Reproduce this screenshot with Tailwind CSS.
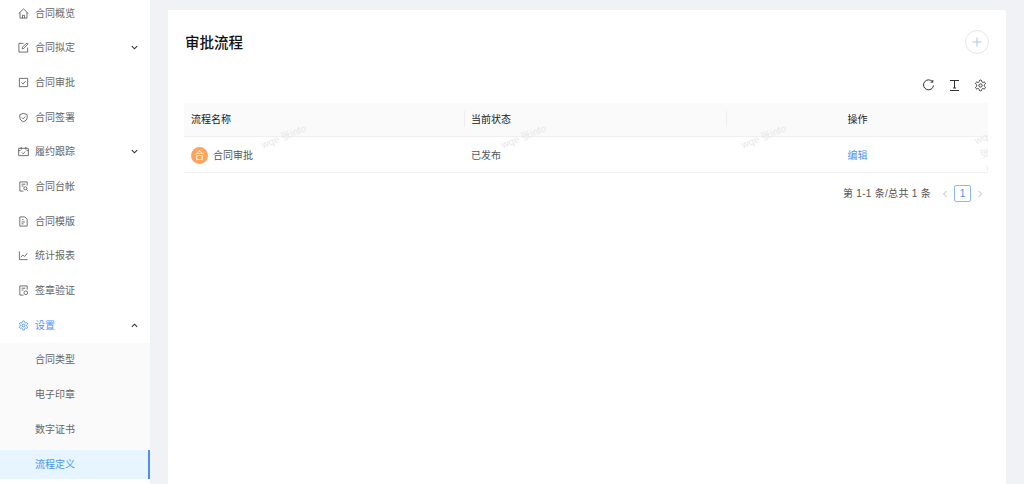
<!DOCTYPE html>
<html lang="zh">
<head>
    <meta charset="UTF-8">
    <title>流程定义</title>
    <script src="https://cdn.jsdelivr.net/npm/@tailwindcss/browser@4"></script>
</head>
<body class="bg-[#f0f2f5] h-[484px] w-[1024px] overflow-hidden font-['Liberation_Sans','Noto_Sans_CJK_SC',sans-serif]">
<div class="flex h-[484px] overflow-hidden">
    <!-- 侧边栏 -->
    <aside class="w-[150px] shrink-0 h-[484px] bg-white text-[10px] text-[#666] overflow-hidden">
        <ul class="-mt-[4.3px]">
            <li class="h-[34.7px] flex items-center pl-[17.500px]">
                <svg class="w-[11px] h-[11px] mr-[6.500px]" viewBox="0 0 12 12" fill="none" stroke="#555" stroke-width=".9"><path d="M.8 6 6 1l5.200 5M2.200 4.800V11h7.600V4.800M4.800 11V8h2.400v3"/></svg>合同概览
            </li>
            <li class="h-[34.7px] flex items-center pl-[17.500px] relative">
                <svg class="w-[11px] h-[11px] mr-[6.500px]" viewBox="0 0 12 12" fill="none" stroke="#555" stroke-width=".9"><path d="M6 1.500H1v9.500h9.500V6M4.500 7.500l.4-2L10 1l1 1-4.600 5z"/></svg>合同拟定
                <svg class="absolute left-[131px] w-[7px] h-[7px]" viewBox="0 0 8 8" fill="none" stroke="#333" stroke-width="1.300"><path d="M1 2.500 4 5.500 7 2.500"/></svg>
            </li>
            <li class="h-[34.7px] flex items-center pl-[17.500px]">
                <svg class="w-[11px] h-[11px] mr-[6.500px]" viewBox="0 0 12 12" fill="none" stroke="#555" stroke-width=".9"><path d="M1.500 1.500h9v9h-9zM3.800 6l1.700 1.700 2.800-3.200"/></svg>合同审批
            </li>
            <li class="h-[34.7px] flex items-center pl-[17.500px]">
                <svg class="w-[11px] h-[11px] mr-[6.500px]" viewBox="0 0 12 12" fill="none" stroke="#555" stroke-width=".9"><path d="M6 1.500 10 2.800V6c0 2.500-1.800 3.800-4 4.500C3.800 9.800 2 8.500 2 6V2.800zM4.200 6l1.400 1.400L7.900 5"/></svg>合同签署
            </li>
            <li class="h-[34.7px] flex items-center pl-[17.500px] relative">
                <svg class="w-[11px] h-[11px] mr-[6.500px]" viewBox="0 0 12 12" fill="none" stroke="#555" stroke-width=".9"><path d="M.7 2.500h10.600v8H.7zM3.500 1v3M8.500 1v3M.7 5h2M9.300 5h2M4 7l1.500 1.500L8 6"/></svg>履约跟踪
                <svg class="absolute left-[131px] w-[7px] h-[7px]" viewBox="0 0 8 8" fill="none" stroke="#333" stroke-width="1.300"><path d="M1 2.500 4 5.500 7 2.500"/></svg>
            </li>
            <li class="h-[34.7px] flex items-center pl-[17.500px]">
                <svg class="w-[11px] h-[11px] mr-[6.500px]" viewBox="0 0 12 12" fill="none" stroke="#555" stroke-width=".9"><path d="M10 5V1H2v10h4M4 3.500h4M4 5.500h2"/><circle cx="8" cy="8" r="1.700"/><path d="M9.300 9.300 11 11"/></svg>合同台帐
            </li>
            <li class="h-[34.7px] flex items-center pl-[17.500px]">
                <svg class="w-[11px] h-[11px] mr-[6.500px]" viewBox="0 0 12 12" fill="none" stroke="#555" stroke-width=".9"><path d="M2 1h5.500L10 3.500V11H2zM4 6.500h3.500M4 8.500h2M4.500 4h1.500"/></svg>合同模版
            </li>
            <li class="h-[34.7px] flex items-center pl-[17.500px]">
                <svg class="w-[11px] h-[11px] mr-[6.500px]" viewBox="0 0 12 12" fill="none" stroke="#555" stroke-width=".9"><path d="M1.500 1.500v9h9M3 8l2.200-2.500 2 1.500 3-3.500"/></svg>统计报表
            </li>
            <li class="h-[34.7px] flex items-center pl-[17.500px]">
                <svg class="w-[11px] h-[11px] mr-[6.500px]" viewBox="0 0 12 12" fill="none" stroke="#555" stroke-width=".9"><path d="M10 5V1H2v10h4M4 3.500h4M4 5.500h2"/><circle cx="8.500" cy="8.500" r="2"/></svg>签章验证
            </li>
            <li class="h-[34.7px] flex items-center pl-[17.500px] relative text-[#4b94f3]">
                <svg class="w-[11px] h-[11px] mr-[6.500px]" viewBox="0 0 24 24" fill="none" stroke="#4b94f3" stroke-width="2"><path d="M12.220 2h-.44a2 2 0 0 0-2 2v.18a2 2 0 0 1-1 1.730l-.43.25a2 2 0 0 1-2 0l-.15-.08a2 2 0 0 0-2.730.73l-.22.38a2 2 0 0 0 .73 2.730l.15.1a2 2 0 0 1 1 1.720v.51a2 2 0 0 1-1 1.740l-.15.09a2 2 0 0 0-.73 2.730l.22.38a2 2 0 0 0 2.730.73l.15-.08a2 2 0 0 1 2 0l.43.25a2 2 0 0 1 1 1.730V20a2 2 0 0 0 2 2h.44a2 2 0 0 0 2-2v-.18a2 2 0 0 1 1-1.730l.43-.25a2 2 0 0 1 2 0l.15.08a2 2 0 0 0 2.730-.73l.22-.39a2 2 0 0 0-.73-2.730l-.15-.08a2 2 0 0 1-1-1.740v-.5a2 2 0 0 1 1-1.740l.15-.09a2 2 0 0 0 .73-2.730l-.22-.38a2 2 0 0 0-2.730-.73l-.15.08a2 2 0 0 1-2 0l-.43-.25a2 2 0 0 1-1-1.730V4a2 2 0 0 0-2-2z"/><circle cx="12" cy="12" r="3"/></svg>设置
                <svg class="absolute left-[131px] w-[7px] h-[7px]" viewBox="0 0 8 8" fill="none" stroke="#333" stroke-width="1.300"><path d="M1 5.500 4 2.500 7 5.500"/></svg>
            </li>
            <li class="bg-[#fafafa]">
                <ul>
                    <li class="h-[34.7px] flex items-center pl-[35px]">合同类型</li>
                    <li class="h-[34.7px] flex items-center pl-[35px]">电子印章</li>
                    <li class="h-[34.7px] flex items-center pl-[35px]">数字证书</li>
                    <li class="h-[29px] mt-[3px] mb-[2.700px] flex items-center pl-[35px] bg-[#e6f5ff] text-[#4b94f3] border-r-2 border-r-[#4a8fef]">流程定义</li>
                </ul>
            </li>
        </ul>
    </aside>

    <!-- 主要内容 -->
    <main class="flex-1 pt-[10px] pl-[18px] pr-[18px]">
        <div class="bg-white h-[474px] pl-4 pr-[18px] relative overflow-hidden">
            <div class="flex items-center justify-between h-[64px]">
                <h1 class="text-[14.5px] font-medium text-[#111] ml-[1px] pt-[3px]">审批流程</h1>
                <button class="w-[24px] h-[24px] rounded-full border border-[#e4e6ea] flex items-center justify-center relative left-[1px]">
                    <svg class="w-[10px] h-[10px]" viewBox="0 0 10 10" fill="none" stroke="#a9c6ea" stroke-width="1"><path d="M5 .5v9M.5 5h9"/></svg>
                </button>
            </div>
            <!-- 工具栏 -->
            <div class="flex justify-end items-center gap-[13px] h-[22px] pr-[1.500px]">
                <svg class="w-[13px] h-[13px]" viewBox="0 0 13 13" fill="none" stroke="#333" stroke-width="1"><path d="M10.500 2.800A5 5 0 1 0 11.500 6.500"/><path d="M10.800 1v2.200H8.600"/></svg>
                <svg class="w-[13px] h-[13px]" viewBox="0 0 13 13" fill="none" stroke="#333" stroke-width="1"><path d="M2 1.500h9M2 11.500h9M6.500 1.500v7.500M5 9h3"/></svg>
                <svg class="w-[13px] h-[13px]" viewBox="0 0 24 24" fill="none" stroke="#333" stroke-width="1.800"><path d="M12.220 2h-.44a2 2 0 0 0-2 2v.18a2 2 0 0 1-1 1.730l-.43.25a2 2 0 0 1-2 0l-.15-.08a2 2 0 0 0-2.730.73l-.22.38a2 2 0 0 0 .73 2.730l.15.1a2 2 0 0 1 1 1.720v.51a2 2 0 0 1-1 1.740l-.15.09a2 2 0 0 0-.73 2.730l.22.38a2 2 0 0 0 2.730.73l.15-.08a2 2 0 0 1 2 0l.43.25a2 2 0 0 1 1 1.730V20a2 2 0 0 0 2 2h.44a2 2 0 0 0 2-2v-.18a2 2 0 0 1 1-1.730l.43-.25a2 2 0 0 1 2 0l.15.08a2 2 0 0 0 2.730-.73l.22-.39a2 2 0 0 0-.73-2.730l-.15-.08a2 2 0 0 1-1-1.740v-.5a2 2 0 0 1 1-1.740l.15-.09a2 2 0 0 0 .73-2.730l-.22-.38a2 2 0 0 0-2.730-.73l-.15.08a2 2 0 0 1-2 0l-.43-.25a2 2 0 0 1-1-1.730V4a2 2 0 0 0-2-2z"/><circle cx="12" cy="12" r="3"/></svg>
            </div>
            <!-- 表格 -->
            <div class="mt-[7px] text-[10px]">
                <div class="grid grid-cols-[280px_263px_261px] h-[34px] items-center bg-[#fafafa] text-[#222] border-b border-[#f0f0f0]">
                    <div class="px-[7px] relative">流程名称<span class="absolute -right-px top-[-1px] h-[16px] w-px bg-[#eee]"></span></div>
                    <div class="px-[7px] relative">当前状态<span class="absolute right-0 top-[-1px] h-[16px] w-px bg-[#eee]"></span></div>
                    <div class="text-center">操作</div>
                </div>
                <div class="grid grid-cols-[280px_263px_261px] h-[36px] pt-[1px] items-center text-[#555] border-b border-[#f0f0f0]">
                    <div class="px-[7px] flex items-center gap-[5px]">
                        <span class="w-[17px] h-[17px] rounded-full bg-[#ffa25c] text-white flex items-center justify-center text-[10px]">合</span>合同审批
                    </div>
                    <div class="px-[7px]">已发布</div>
                    <div class="text-center text-[#4b94f3]">编辑</div>
                </div>
            </div>
            <!-- 分页 -->
            <div class="flex justify-end items-center h-[17px] mt-[12px] text-[10px] text-[#555] pr-[4px]">
                <span class="tracking-[.3px]">第 1-1 条/总共 1 条</span>
                <svg class="w-[8px] h-[8px] ml-[10px]" viewBox="0 0 8 8" fill="none" stroke="#bbb" stroke-width="1"><path d="M5.500 1 2.500 4l3 3"/></svg>
                <span class="w-[17px] h-[17px] ml-[5px] border border-[#8db9f2] rounded-[2px] text-[#4b94f3] flex items-center justify-center">1</span>
                <svg class="w-[8px] h-[8px] ml-[5px]" viewBox="0 0 8 8" fill="none" stroke="#bbb" stroke-width="1"><path d="M2.500 1l3 3-3 3"/></svg>
            </div>
        </div>
    </main>
</div>
<!-- 水印 -->
<div class="pointer-events-none absolute left-0 top-0 w-[988px] h-[484px] overflow-hidden">
    <span class="absolute left-[260px] top-[129px] -rotate-[22deg] text-[10px] text-[#e8e8e8]">wqe 张info</span>
    <span class="absolute left-[500px] top-[129px] -rotate-[22deg] text-[10px] text-[#e8e8e8]">wqe 张info</span>
    <span class="absolute left-[740px] top-[129px] -rotate-[22deg] text-[10px] text-[#e8e8e8]">wqe 张info</span>
    <span class="absolute left-[980px] top-[129px] -rotate-[22deg] text-[10px] text-[#e8e8e8]">wqe 张info</span>
</div>
</body>
</html>
